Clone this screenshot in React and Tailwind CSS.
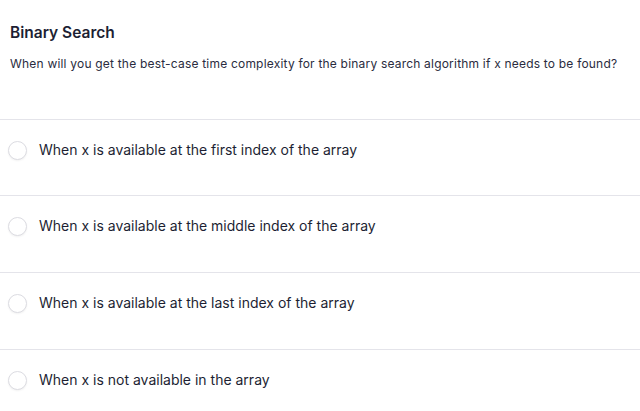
import React from 'react';

const options = [
  'When x is available at the first index of the array',
  'When x is available at the middle index of the array',
  'When x is available at the last index of the array',
  'When x is not available in the array',
];

export default function App() {
  return (
    <div className="w-[640px] h-[411px] overflow-hidden bg-white text-[#1d1f33]" style={{ fontFamily: 'Inter, "Noto Sans", sans-serif' }}>
      {/* Question header */}
      <div className="px-[10px] pt-[23px] h-[118.5px]">
        <h2 className="text-[15.5px] font-semibold leading-[20px]">Binary Search</h2>
        <p className="mt-[13px] text-[12px] leading-[16px] tracking-[0.2px] text-[#2a2c40]">
          When will you get the best-case time complexity for the binary search algorithm if x needs to be found?
        </p>
      </div>

      {/* Options */}
      {options.map((text, i) => (
        <div key={i} className="border-t-[1.5px] border-[#e4e4ea] h-[76.7px] flex items-start gap-[12px] pl-[8px] pt-[21px]">
          <span className="w-[19px] h-[19px] rounded-full border border-[#dcdce2] bg-white shadow-[0_1px_2px_rgba(0,0,0,0.06)] shrink-0"></span>
          <span className="text-[14px] leading-[18px]">{text}</span>
        </div>
      ))}
    </div>
  );
}
